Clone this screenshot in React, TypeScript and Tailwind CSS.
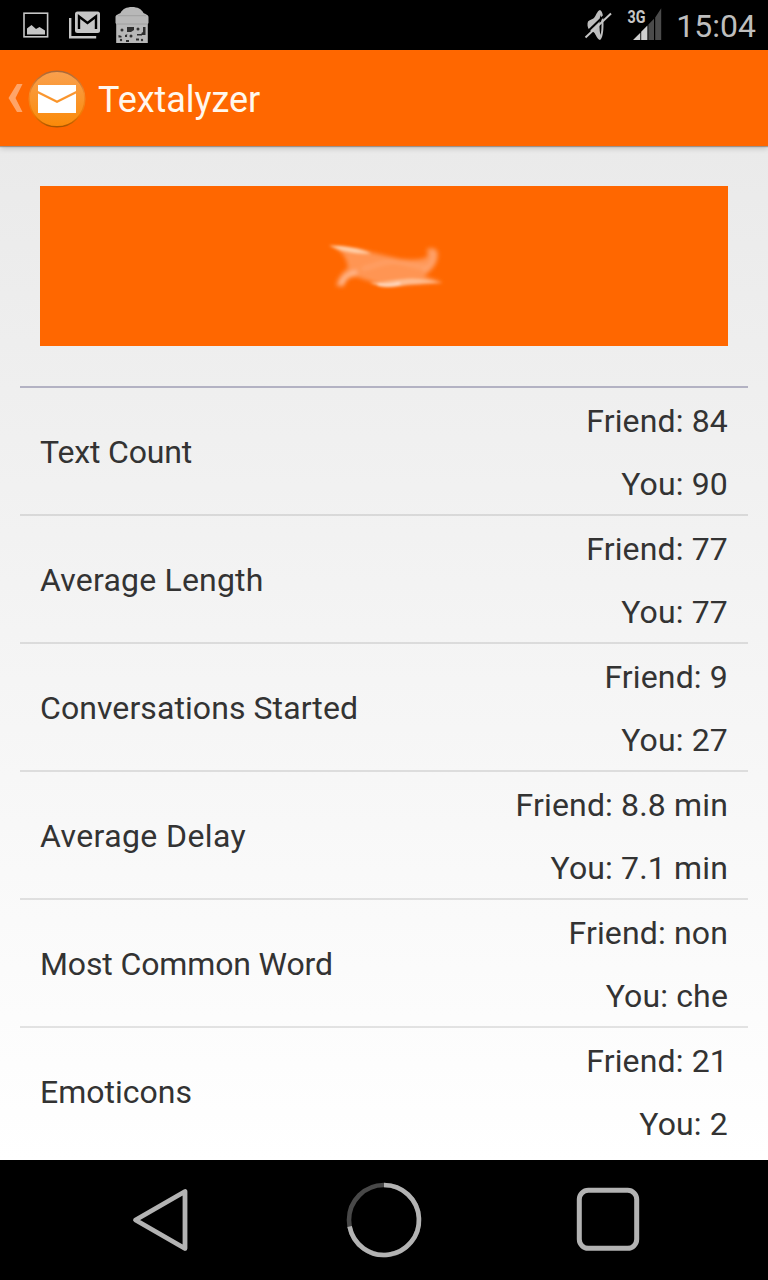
const stats = [
  { label: 'Text Count', friend: '84', you: '90', tracking: 'tracking-[-0.15px]' },
  { label: 'Average Length', friend: '77', you: '77', tracking: 'tracking-[0.2px]' },
  { label: 'Conversations Started', friend: '9', you: '27', tracking: 'tracking-[0.08px]' },
  { label: 'Average Delay', friend: '8.8 min', you: '7.1 min', tracking: 'tracking-[0.4px]' },
  { label: 'Most Common Word', friend: 'non', you: 'che', tracking: 'tracking-[-0.13px]' },
  { label: 'Emoticons', friend: '21', you: '2', tracking: 'tracking-normal' },
];

function StatusBar() {
  return (
    <div className="flex h-[50px] shrink-0 items-center justify-between bg-black">
      <svg width="160" height="50" viewBox="0 0 160 50" fill="none">
        {/* Picture */}
        <rect x="24" y="13.2" width="23.6" height="23.6" stroke="#c6c6c6" strokeWidth="1.6" />
        <path d="M27 34.500v-6l4.500-3.500 4.500 4 3.500-2 5.500 3.500v4z" fill="#c6c6c6" />
        {/* Gmail */}
        <path d="M70.200 18v19.200h26" stroke="#c6c6c6" strokeWidth="2.400" />
        <rect x="75" y="11.500" width="25" height="21.500" rx="2.500" fill="#c6c6c6" />
        <path d="M79 29V16.500l8.500 6.500 8.500-6.500V29" stroke="#000" strokeWidth="2.400" />
        {/* Jar */}
        <path d="M115.500 23v-6c0-2 3-3 5-4 2-4 6-6 11.500-6s9.500 2 11.500 6c2 1 5 2 5 4v6l-.7 1v19h-31.600V24z" fill="#b8b8b8" />
        <path d="M117 24h30.500M118 15.700h28" stroke="#999" strokeWidth="0.800" />
        <path d="M127 27h7v3l-3 2h-4zM143 27h2.500v8h-4v-2l1.500-1zM118.500 35l3 1v1.500h-3zM125 35l3-1v3h-3zM136 38.500h3v2h-3zM126 40h3v2h-3zM137 34h5v1.500h-5z" fill="#2e2e2e" />
        <g fill="#b8b8b8">
          <circle cx="122" cy="30" r="3.500" />
          <circle cx="138" cy="29" r="3.500" />
          <circle cx="131" cy="36" r="4" />
        </g>
        <g fill="#333">
          <circle cx="122" cy="30" r="1.500" />
          <circle cx="138" cy="29" r="1.500" />
          <circle cx="131" cy="36" r="1.500" />
          <circle cx="121" cy="40" r="1.200" />
          <circle cx="142" cy="40" r="1.200" />
        </g>
      </svg>
      <div className="flex items-center pr-3">
        <svg width="96" height="50" viewBox="580 0 96 50" fill="none">
          {/* Muted ringer */}
          <path d="M588 21.500c1.500-2 4-1.500 6-3.500 2-2.200 3-7 6-8 2.800 1.500 3.500 7 3.500 14.500s-1 14-3.500 15.500c-3-1-4-5.500-6-7.500-1.500-1.500-3.500-1.500-5-3-1.500-2-2-5.500-1-8z" fill="#bdbdbd" />
          <path d="M600.500 15c-.8 3-1 6-1 10s.2 7 1 10c.8-3 1-6.500 1-10s-.2-7-1-10z" fill="#000" />
          <path d="M584 35L609 11" stroke="#000" strokeWidth="2" />
          <path d="M585.500 37.500L611 13.500" stroke="#c6c6c6" strokeWidth="2" />
          {/* Signal strength */}
          <path d="M633 40l7.300-7.300V40zM641.200 31.800l6.200-6.200V40h-6.200z" fill="#d0d0d0" />
          <path d="M648.400 24.600l5.600-5.800V40h-5.600zM655.200 17.500l6-9.300V40h-6z" fill="#4b4b4b" />
          <text x="627.500" y="22.700" textLength="18" lengthAdjust="spacingAndGlyphs" fill="#c6c6c6" className="font-['Roboto',sans-serif] text-[18px] font-bold">3G</text>
        </svg>
        <span className="pt-0.5 text-[32px] leading-none text-[#bebebe]">15:04</span>
      </div>
    </div>
  );
}

function ActionBar() {
  return (
    <header className="relative flex h-24 shrink-0 items-center bg-[#ff6700] shadow-[0_1px_1px_rgba(90,60,40,0.4),0_2px_6px_rgba(0,0,0,0.2)]">
      <svg width="98" height="96" viewBox="0 0 98 96" fill="none">
        <defs>
          <linearGradient id="badge" x1="0" y1="0" x2="0" y2="1">
            <stop offset="0" stopColor="#f9a04e" />
            <stop offset="1" stopColor="#fb8a08" />
          </linearGradient>
          <linearGradient id="rim" x1="0" y1="0" x2="0" y2="1">
            <stop offset="0" stopColor="#a8683a" />
            <stop offset="0.4" stopColor="#f58a28" />
            <stop offset="0.8" stopColor="#f07800" />
            <stop offset="1" stopColor="#a85500" />
          </linearGradient>
        </defs>
        <path d="M17 34h5.500L15.500 48l7 14H17L8.500 48z" fill="#ffa468" />
        <circle cx="57" cy="49" r="27.800" fill="url(#badge)" stroke="url(#rim)" strokeWidth="1.400" />
        <path d="M38 35h38v6L57 50.500 38 41z" fill="#fff" />
        <path d="M38 43.500L57 53l19-9.500V63H38z" fill="#fff" />
      </svg>
      <h1 className="pt-[3px] text-[36px] leading-none tracking-[-0.05px] text-[#fff8ee]">Textalyzer</h1>
    </header>
  );
}

function Banner() {
  return (
    <div className="mx-10 mt-10 flex h-40 shrink-0 items-center justify-center bg-[#ff6700]">
      <svg width="240" height="90" viewBox="0 0 240 90">
        <defs>
          <filter id="soft" x="-20%" y="-20%" width="140%" height="140%">
            <feGaussianBlur stdDeviation="2" />
          </filter>
          <filter id="fine" x="-20%" y="-100%" width="140%" height="300%">
            <feGaussianBlur stdDeviation="1.500" />
          </filter>
        </defs>
        <g filter="url(#soft)">
          <path d="M72 27c12 0 24 1 34 4 10 2 20 5 30 7 10 1 18 1 25-1 5-3 1-6 2-9 4-2 11-1 11 5 0 9-5 16-14 22 6 2 12 4 18 6-14 2-40 3-55 3-12-1-20-5-30-8-6 0-9 1-11 5l-3 5-7-1c1-6 4-12 12-18-1-7-3-14-12-20z" fill="#ff9552" />
          <path d="M98 48c14-3 22-9 38-7 12 2 20 7 30 4" stroke="#ffa974" strokeWidth="4" fill="none" opacity="0.600" />
          <path d="M77 64c2-7 6-11 16-13" stroke="#ffb88c" strokeWidth="4.500" fill="none" />
          <path d="M168 30c4 9-1 15-9 20" stroke="#ffa26a" strokeWidth="5" fill="none" />
        </g>
        <g filter="url(#fine)">
          <path d="M65 24.500c15 0 32 3 42 8-14 1-31-2-42-8z" fill="#ffd0ac" />
          <path d="M106 61.500c16 0 28-4 42-4 12 0 22 3 31 4-20 1-31 1-41 3-12 2-24 1-32-3z" fill="#ffbd90" />
          <path d="M114 63.500c7 1.500 16 1 22-1" stroke="#ffe1cd" strokeWidth="2.500" fill="none" />
        </g>
      </svg>
    </div>
  );
}

function NavBar() {
  return (
    <nav className="flex h-[120px] shrink-0 bg-black">
      <svg width="768" height="120" viewBox="0 0 768 120" fill="none" stroke="#b3b3b3">
        <path d="M135.500 60L185 31.500v57z" strokeWidth="4.800" strokeLinejoin="round" />
        <circle cx="384" cy="60" r="35" strokeWidth="4.600" stroke="#484848" />
        <path d="M384 25a35 35 0 1 1-34.400 41.500" strokeWidth="4.600" />
        <rect x="579.300" y="30.300" width="57.400" height="58" rx="9" strokeWidth="5" />
      </svg>
    </nav>
  );
}

export default function App() {
  return (
    <div className="flex h-[1280px] w-[768px] flex-col overflow-hidden bg-black font-['Roboto',sans-serif]">
      <StatusBar />
      <ActionBar />
      <main className="flex h-[1014px] shrink-0 flex-col bg-linear-to-b from-[#eaeaea] to-white">
        <Banner />
        <div className="mx-5 mt-10 border-t-2 border-[#b3b2c3] text-[32px] text-[#333]">
          {stats.map((stat) => (
            <div key={stat.label} className="flex h-32 items-center justify-between border-b-2 border-black/10 px-5 last:border-transparent">
              <span className={`pt-0.5 ${stat.tracking}`}>{stat.label}</span>
              <div className="pt-1 text-right leading-[63px] tracking-[0.15px]">
                <div>Friend: {stat.friend}</div>
                <div>You: {stat.you}</div>
              </div>
            </div>
          ))}
        </div>
      </main>
      <NavBar />
    </div>
  );
}
